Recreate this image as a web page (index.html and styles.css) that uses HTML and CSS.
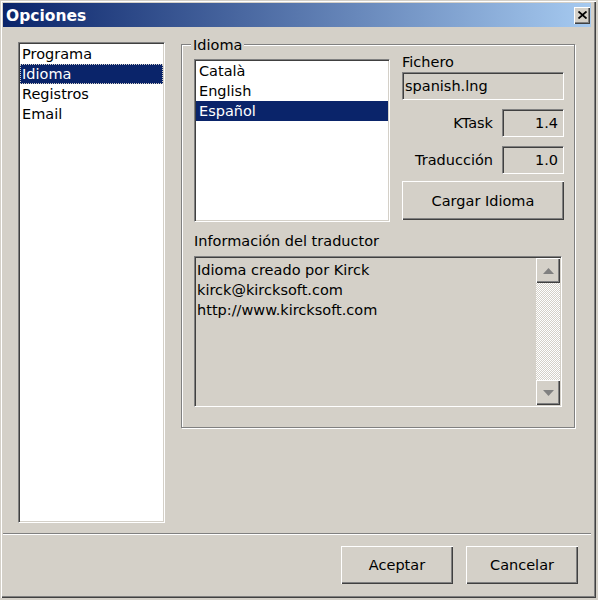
FILE: index.html
```html
<!DOCTYPE html>
<html lang="es">
<head>
<meta charset="utf-8">
<title>Opciones</title>
<link rel="stylesheet" href="styles.css">
</head>
<body>
<div class="window">
  <div class="titlebar">
    <span class="title">Opciones</span>
    <button class="close" aria-label="Cerrar">
      <svg width="9" height="8" viewBox="0 0 9 8"><path d="M0.5 0.5 L8.5 7.5 M8.5 0.5 L0.5 7.5" stroke="#000" stroke-width="1.8" fill="none"/></svg>
    </button>
  </div>
  <div class="content">
    <ul class="list nav">
      <li>Programa</li>
      <li class="sel focus">Idioma</li>
      <li>Registros</li>
      <li>Email</li>
    </ul>
    <div class="group">
      <span class="legend">Idioma</span>
      <div class="toprow">
        <ul class="list langs">
          <li>Català</li>
          <li>English</li>
          <li class="sel">Español</li>
        </ul>
        <div class="side">
          <div class="caption">Fichero</div>
          <div class="field">spanish.lng</div>
          <div class="row"><span>KTask</span><div class="field num">1.4</div></div>
          <div class="row"><span>Traducción</span><div class="field num">1.0</div></div>
          <button class="btn load">Cargar Idioma</button>
        </div>
      </div>
      <div class="caption info">Información del traductor</div>
      <div class="memo">
        <div class="memo-text">Idioma creado por Kirck<br>kirck@kircksoft.com<br>http://www.kircksoft.com</div>
        <div class="scrollbar">
          <div class="sb-btn"><svg width="11" height="6" viewBox="0 0 11 6"><polygon points="0,6 5.5,0 11,6" fill="#808080"/></svg></div>
          <div class="sb-track"></div>
          <div class="sb-btn"><svg width="11" height="6" viewBox="0 0 11 6"><polygon points="0,0 5.5,6 11,0" fill="#808080"/></svg></div>
        </div>
      </div>
    </div>
  </div>
  <div class="sep"></div>
  <div class="footer">
    <button class="btn fbtn">Aceptar</button>
    <button class="btn fbtn">Cancelar</button>
  </div>
</div>
</body>
</html>
```
FILE: styles.css
```css
* { box-sizing: border-box; }

body {
  margin: 0;
  background: #d4d0c8;
  font-family: "DejaVu Sans", Verdana, sans-serif;
  font-size: 14.5px;
  color: #000;
}

.window {
  width: 596px;
  height: 598px;
  padding: 3px 5px 0 3px;
  background: #d4d0c8;
  box-shadow: inset 1px 1px 0 #d4d0c8, inset 2px 2px 0 #fff,
              inset -1px -1px 0 #404040, inset -2px -2px 0 #808080;
  display: flex;
  flex-direction: column;
}

.titlebar {
  height: 24px;
  display: flex;
  align-items: center;
  justify-content: space-between;
  padding: 0 1px 0 3px;
  background: linear-gradient(to right, #0a246a, #a6caf0);
}

.title {
  color: #fff;
  font-weight: bold;
  font-size: 15.5px;
  padding-top: 2px;
}

.close {
  width: 16px;
  height: 17px;
  padding: 0;
  border: 0;
  background: #d4d0c8;
  display: flex;
  align-items: center;
  justify-content: center;
  box-shadow: inset 1px 1px 0 #fff, inset -1px -1px 0 #404040, inset -2px -2px 0 #808080;
}

.content {
  display: flex;
  align-items: flex-start;
  gap: 16px;
  padding: 15px 16px 10px 15px;
}

.list {
  list-style: none;
  margin: 0;
  padding: 1px;
  background: #fff;
  border: 1px solid;
  border-color: #808080 #fff #fff #808080;
  box-shadow: inset 1px 1px 0 #404040, inset -1px -1px 0 #d4d0c8;
}

.list li {
  height: 20px;
  line-height: 21px;
  white-space: nowrap;
}

.list li.sel {
  background: #0a246a;
  color: #fff;
}

.nav {
  width: 147px;
  height: 481px;
  flex: none;
}

.nav li { padding-left: 2px; }

.nav li.focus {
  outline: 1px dotted #d4d0c8;
  outline-offset: -1px;
}

.group {
  position: relative;
  width: 394px;
  height: 384px;
  flex: none;
  margin-top: 2px;
  padding: 8px 9px 0 12px;
  border: 1px solid #808080;
  box-shadow: 1px 1px 0 #fff, inset 1px 1px 0 #fff;
}

.legend {
  position: absolute;
  top: -9px;
  left: 9px;
  padding: 0 2px;
  line-height: 18px;
  background: #d4d0c8;
}

.toprow {
  display: flex;
  align-items: flex-start;
  gap: 12px;
}

.langs {
  width: 196px;
  height: 163px;
  margin-top: 6px;
  flex: none;
}

.langs li { padding-left: 3px; }

.side {
  width: 162px;
  flex: none;
  display: flex;
  flex-direction: column;
}

.caption { line-height: 19px; }

.field {
  height: 28px;
  line-height: 26px;
  padding: 0 2px;
  background: #d4d0c8;
  border: 1px solid;
  border-color: #808080 #fff #fff #808080;
  box-shadow: inset 1px 1px 0 #404040, inset -1px -1px 0 #d4d0c8;
  white-space: nowrap;
}

.row {
  display: flex;
  justify-content: flex-end;
  align-items: center;
  gap: 9px;
  margin-top: 9px;
}

.field.num {
  width: 62px;
  text-align: right;
  padding-right: 5px;
}

.btn {
  font: inherit;
  color: #000;
  background: #d4d0c8;
  border: 0;
  padding: 0;
  box-shadow: inset 1px 1px 0 #fff, inset -1px -1px 0 #404040, inset -2px -2px 0 #808080;
}

.load {
  width: 100%;
  height: 39px;
  margin-top: 7px;
}

.info { margin-top: 10px; }

.memo {
  display: flex;
  width: 368px;
  height: 151px;
  margin-top: 5px;
  background: #d4d0c8;
  border: 1px solid;
  border-color: #808080 #fff #fff #808080;
  box-shadow: inset 1px 1px 0 #404040, inset -1px -1px 0 #d4d0c8;
  padding: 1px;
}

.memo-text {
  flex: 1;
  padding: 2px 1px 0;
  line-height: 20px;
}

.scrollbar {
  width: 24px;
  display: flex;
  flex-direction: column;
}

.sb-btn {
  height: 25px;
  display: flex;
  align-items: center;
  justify-content: center;
  background: #d4d0c8;
  box-shadow: inset 1px 1px 0 #fff, inset -1px -1px 0 #404040, inset -2px -2px 0 #808080;
}

.sb-track {
  flex: 1;
  background: repeating-conic-gradient(#fff 0 25%, #d4d0c8 0 50%) 0 0 / 2px 2px;
}

.sep {
  height: 2px;
  border-top: 1px solid #808080;
  border-bottom: 1px solid #fff;
}

.footer {
  display: flex;
  justify-content: flex-end;
  gap: 13px;
  padding: 11px 13px 0 0;
}

.fbtn {
  width: 112px;
  height: 38px;
}
```
